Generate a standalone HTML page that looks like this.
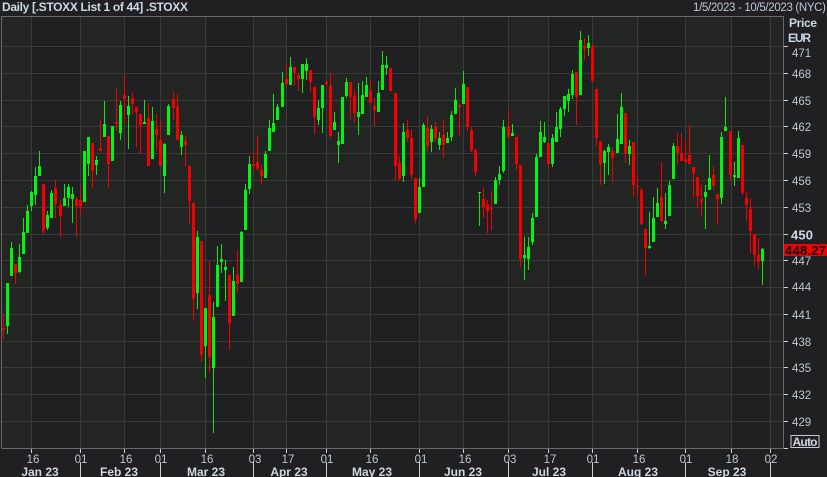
<!DOCTYPE html>
<html><head><meta charset="utf-8"><style>
html,body{margin:0;padding:0;background:#201f22;width:827px;height:477px;overflow:hidden}
svg{display:block}
text{font-family:"Liberation Sans",sans-serif;font-size:11.5px;fill:#bcc8d4}
.b{font-weight:bold;fill:#ccd8e4;font-size:12px}
.m{text-anchor:middle}
</style></head><body>
<svg width="827" height="477" viewBox="0 0 827 477" xmlns="http://www.w3.org/2000/svg">
<rect width="827" height="477" fill="#201f22"/>
<g shape-rendering="crispEdges">
<path fill="#222522" d="M1 16H31V448H1ZM80 16H124V448H80ZM160 16H205V448H160ZM253 16H286V448H253ZM326 16H370V448H326ZM419 16H463V448H419ZM508 16H548V448H508ZM592 16H637V448H592ZM685 16H731V448H685ZM770 16H783V448H770Z"/>
<path stroke="#393b39" fill="none" d="M1 46.5H784M1 73.5H784M1 100.5H784M1 126.5H784M1 153.5H784M1 180.5H784M1 207.5H784M1 234.5H784M1 260.5H784M1 287.5H784M1 314.5H784M1 341.5H784M1 367.5H784M1 394.5H784M1 421.5H784M31.5 16V448M80.5 16V448M124.5 16V448M160.5 16V448M205.5 16V448M253.5 16V448M286.5 16V448M326.5 16V448M370.5 16V448M419.5 16V448M463.5 16V448M508.5 16V448M548.5 16V448M592.5 16V448M637.5 16V448M685.5 16V448M731.5 16V448M770.5 16V448"/>
<path stroke="#6a6a6a" fill="none" d="M1.5 448V16.5H783.5V448.5H1.5"/>
<path stroke="#c8d0d8" fill="none" d="M784 46.5H788M784 73.5H788M784 100.5H788M784 126.5H788M784 153.5H788M784 180.5H788M784 207.5H788M784 234.5H788M784 260.5H788M784 287.5H788M784 314.5H788M784 341.5H788M784 367.5H788M784 394.5H788M784 421.5H788M784 448.5H788M31.5 449V453M80.5 449V453M124.5 449V453M160.5 449V453M205.5 449V453M253.5 449V453M286.5 449V453M326.5 449V453M370.5 449V453M419.5 449V453M463.5 449V453M508.5 449V453M548.5 449V453M592.5 449V453M637.5 449V453M685.5 449V453M731.5 449V453M770.5 449V453M80.5 462V477M160.5 462V477M253.5 462V477M326.5 462V477M419.5 462V477M508.5 462V477M592.5 462V477M685.5 462V477M770.5 462V477"/>
<path stroke="#f00000" fill="none" stroke-width="1" d="M3.5 314V339M15.5 264V284M43.5 184V235M55.5 180V218M60.5 200V237M76.5 197V237M80.5 185V215M92.5 143V188M100.5 120V151M108.5 136V188M116.5 89V131M124.5 74V123M132.5 93V114M136.5 107V147M140.5 114V154M148.5 103V166M156.5 114V151M160.5 120V166M173.5 91V120M177.5 94V140M185.5 135V167M189.5 166V224M193.5 203V321M201.5 241V362M209.5 261V372M229.5 275V350M237.5 250V293M253.5 153V171M257.5 136V170M261.5 165V185M286.5 64V87M294.5 67V86M298.5 73V91M310.5 70V92M314.5 87V134M326.5 80V87M330.5 73V138M350.5 82V119M354.5 90V123M370.5 80V103M374.5 98V126M390.5 68V91M395.5 93V180M399.5 156V180M407.5 120V142M411.5 129V179M415.5 178V223M427.5 116V152M435.5 122V142M443.5 119V158M459.5 104V135M467.5 87V131M471.5 127V152M475.5 149V176M483.5 187V218M487.5 200V233M491.5 191V230M508.5 109V139M516.5 137V170M520.5 165V267M548.5 143V168M576.5 72V125M584.5 38V60M592.5 44V82M596.5 89V146M600.5 141V185M612.5 147V182M625.5 113V163M633.5 142V197M637.5 174V199M641.5 188V225M645.5 229V275M661.5 162V222M677.5 133V165M681.5 133V161M685.5 140V163M689.5 125V164M693.5 167V198M697.5 177V208M701.5 185V216M713.5 166V190M717.5 194V225M730.5 131V181M742.5 145V195M746.5 191V221M750.5 199V253M754.5 234V266M758.5 238V269"/>
<path stroke="#f40000" fill="none" stroke-width="3" d="M3.5 328V330M15.5 264V273M43.5 184V231M55.5 188V204M60.5 205V216M76.5 199V206M80.5 200V207M92.5 143V171M100.5 148V151M108.5 136V164M116.5 122V124M124.5 95V99M132.5 98V104M136.5 107V112M140.5 114V125M148.5 118V166M156.5 129V135M160.5 140V166M173.5 99V108M177.5 107V140M185.5 141V145M189.5 166V201M193.5 203V299M201.5 241V355M209.5 295V357M229.5 275V323M237.5 275V284M253.5 164V166M257.5 162V169M261.5 170V176M286.5 79V84M294.5 67V73M298.5 75V79M310.5 70V82M314.5 87V117M326.5 82V84M330.5 86V136M350.5 82V97M354.5 96V113M370.5 90V103M374.5 106V110M390.5 68V91M395.5 93V166M399.5 163V179M407.5 130V138M411.5 138V175M415.5 178V219M427.5 128V146M435.5 127V138M443.5 135V145M459.5 105V107M467.5 87V127M471.5 130V151M475.5 150V172M483.5 199V207M487.5 205V211M491.5 208V209M508.5 127V137M516.5 137V164M520.5 165V259M548.5 143V164M576.5 72V97M584.5 46V49M592.5 47V81M596.5 89V138M600.5 141V164M612.5 151V158M625.5 113V153M633.5 142V185M637.5 186V187M641.5 190V224M645.5 229V248M661.5 197V221M677.5 146V153M681.5 153V161M685.5 159V162M689.5 155V164M693.5 167V173M697.5 177V196M701.5 199V202M713.5 175V186M717.5 194V199M730.5 131V175M742.5 145V193M746.5 198V205M750.5 209V231M754.5 234V255M758.5 255V262"/>
<path stroke="#0ce80c" fill="none" stroke-width="1" d="M7.5 283V334M11.5 242V276M19.5 244V273M23.5 218V254M27.5 205V233M31.5 191V211M35.5 167V205M39.5 151V176M47.5 211V230M51.5 190V218M64.5 184V206M68.5 184V207M72.5 187V223M84.5 151V202M88.5 137V176M96.5 156V175M104.5 101V137M112.5 126V161M120.5 101V140M128.5 96V149M144.5 100V124M152.5 107V159M164.5 143V193M168.5 104V135M181.5 131V155M197.5 231V309M205.5 308V378M213.5 302V433M217.5 246V307M221.5 244V273M225.5 260V301M233.5 267V316M241.5 231V282M245.5 184V230M249.5 156V194M265.5 151V178M269.5 120V151M273.5 94V132M277.5 104V120M282.5 72V107M290.5 57V85M302.5 64V93M306.5 58V80M318.5 100V125M322.5 85V133M334.5 112V130M338.5 132V163M342.5 97V144M346.5 78V98M358.5 83V135M362.5 81V114M366.5 77V97M378.5 81V112M382.5 51V90M386.5 56V75M403.5 123V182M419.5 178V213M423.5 123V187M431.5 125V152M439.5 132V150M447.5 132V143M451.5 111V141M455.5 88V114M463.5 71V104M479.5 192V226M495.5 177V204M499.5 166V185M503.5 120V173M512.5 124V136M524.5 237V280M528.5 237V270M532.5 213V245M536.5 154V217M540.5 121V157M544.5 122V143M552.5 134V167M556.5 112V142M560.5 107V137M564.5 96V116M568.5 89V112M572.5 70V99M580.5 31V95M588.5 35V56M604.5 150V184M608.5 144V175M617.5 114V153M621.5 93V144M629.5 140V165M649.5 212V249M653.5 197V242M657.5 188V217M665.5 193V229M669.5 181V216M673.5 143V179M705.5 185V229M709.5 155V190M721.5 132V204M725.5 97V131M734.5 162V186M738.5 131V178M762.5 248V285"/>
<path stroke="#00f510" fill="none" stroke-width="3" d="M7.5 283V326M11.5 248V276M19.5 257V272M23.5 232V254M27.5 211V233M31.5 192V206M35.5 176V195M39.5 166V176M47.5 215V228M51.5 193V218M64.5 198V206M68.5 187V198M72.5 194V199M84.5 151V202M88.5 137V164M96.5 160V165M104.5 124V137M112.5 126V161M120.5 105V133M128.5 106V115M144.5 122V124M152.5 121V159M164.5 144V176M168.5 106V135M181.5 135V147M197.5 237V293M205.5 308V346M213.5 317V368M217.5 265V307M221.5 259V262M225.5 267V270M233.5 281V316M241.5 232V282M245.5 190V230M249.5 164V189M265.5 154V178M269.5 128V151M273.5 123V132M277.5 107V120M282.5 83V107M290.5 67V85M302.5 64V79M306.5 64V71M318.5 108V120M322.5 85V108M334.5 122V130M338.5 141V145M342.5 97V144M346.5 82V96M358.5 112V117M362.5 95V114M366.5 85V97M378.5 93V112M382.5 65V90M386.5 65V68M403.5 132V176M419.5 187V213M423.5 125V187M431.5 129V142M439.5 138V145M447.5 138V143M451.5 115V137M455.5 100V114M463.5 84V104M479.5 192V193M495.5 180V204M499.5 174V180M503.5 127V171M512.5 133V136M524.5 255V258M528.5 247V259M532.5 218V242M536.5 157V217M540.5 132V157M544.5 137V142M552.5 138V164M556.5 127V142M560.5 109V129M564.5 96V109M568.5 94V101M572.5 74V95M580.5 40V95M588.5 43V48M604.5 151V163M608.5 147V152M617.5 139V153M621.5 107V144M629.5 146V154M649.5 246V248M653.5 218V242M657.5 203V217M665.5 221V224M669.5 185V216M673.5 146V179M705.5 192V197M709.5 178V190M721.5 137V198M725.5 127V131M734.5 175V177M738.5 138V178M762.5 249V261"/>
<rect x="784" y="244" width="43" height="12" fill="#f00000"/>
<rect x="791" y="435.5" width="28" height="12" fill="none" stroke="#c8ccd0"/>
</g>
<text x="2" y="11" class="b" textLength="186">Daily [.STOXX List 1 of 44] .STOXX</text>
<text x="693" y="11" textLength="133">1/5/2023 - 10/5/2023 (NYC)</text>
<text x="789" y="27" class="b" textLength="28">Price</text>
<text x="788" y="42" class="b" textLength="23">EUR</text>
<text x="792" y="57">471</text>
<text x="792" y="78">468</text>
<text x="792" y="105">465</text>
<text x="792" y="131">462</text>
<text x="792" y="158">459</text>
<text x="792" y="185">456</text>
<text x="792" y="212">453</text>
<text x="791" y="239.5" class="b" style="font-size:13px" textLength="22">450</text>
<text x="785" y="255" style="font-size:13px;font-weight:bold;fill:#000" textLength="41">448.27</text>
<text x="792" y="265">447</text>
<text x="792" y="291">444</text>
<text x="792" y="319">441</text>
<text x="792" y="346">438</text>
<text x="792" y="372">435</text>
<text x="792" y="399">432</text>
<text x="792" y="426">429</text>
<text x="792.5" y="446" class="b" textLength="25">Auto</text>
<text x="33" y="463" class="m">16</text>
<text x="81" y="463" class="m">01</text>
<text x="126" y="463" class="m">16</text>
<text x="161" y="463" class="m">01</text>
<text x="207" y="463" class="m">16</text>
<text x="255" y="463" class="m">03</text>
<text x="288" y="463" class="m">17</text>
<text x="327" y="463" class="m">01</text>
<text x="372" y="463" class="m">16</text>
<text x="421" y="463" class="m">01</text>
<text x="465" y="463" class="m">16</text>
<text x="510" y="463" class="m">03</text>
<text x="550" y="463" class="m">17</text>
<text x="593" y="463" class="m">01</text>
<text x="639" y="463" class="m">16</text>
<text x="686" y="463" class="m">01</text>
<text x="732" y="463" class="m">18</text>
<text x="771" y="463" class="m">02</text>
<text x="40" y="476" class="b m">Jan 23</text>
<text x="119" y="476" class="b m">Feb 23</text>
<text x="206" y="476" class="b m">Mar 23</text>
<text x="289" y="476" class="b m">Apr 23</text>
<text x="372" y="476" class="b m">May 23</text>
<text x="463" y="476" class="b m">Jun 23</text>
<text x="549" y="476" class="b m">Jul 23</text>
<text x="638" y="476" class="b m">Aug 23</text>
<text x="727" y="476" class="b m">Sep 23</text>
</svg>
</body></html>
